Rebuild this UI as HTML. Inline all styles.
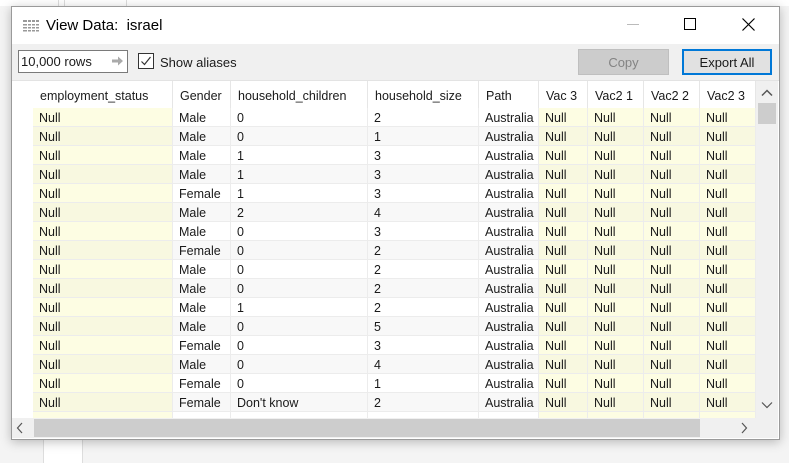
<!DOCTYPE html>
<html><head><style>
*{margin:0;padding:0;box-sizing:border-box}
body{width:789px;height:463px;background:#f4f4f4;position:relative;overflow:hidden;font-family:"Liberation Sans",Arial,sans-serif;font-size:12.5px;color:#1a1a1a}
.a{position:absolute}
.win{left:11px;top:6px;width:769px;height:434px;background:#fff;border:1px solid #9a9a9a;box-shadow:0 2px 10px rgba(0,0,0,.25)}
.cell{position:absolute;height:19px;line-height:21px;padding-left:6px;white-space:nowrap;overflow:hidden;border-right:1px solid #ececec;border-bottom:1px solid #ececec}
.hd{position:absolute;top:81px;height:28px;line-height:30px;padding-left:7px;border-right:1px solid #e6e6e6;background:#fff;white-space:nowrap;overflow:hidden}
</style></head><body>
<div class="a" style="left:0;top:0;width:789px;height:6px;background:#fff"></div>
<div class="a" style="left:58px;top:0;width:1px;height:463px;background:#ddd"></div>
<div class="a" style="left:64px;top:0;width:1px;height:463px;background:#ddd"></div>
<div class="a" style="left:126px;top:0;width:1px;height:463px;background:#ddd"></div>
<div class="a" style="left:0;top:440px;width:789px;height:23px;background:#f4f4f4"></div>
<div class="a" style="left:43px;top:440px;width:40px;height:23px;background:#fff;border-left:1px solid #ddd;border-right:1px solid #ddd"></div>
<div class="a win"></div>
<svg class="a" style="left:23px;top:19px" width="16" height="14"><g fill="#999"><rect x="0" y="1" width="16" height="2"/><rect x="0" y="5" width="16" height="1.5"/><rect x="0" y="8" width="16" height="1.5"/><rect x="0" y="11" width="16" height="1.5"/></g><g fill="#fff"><rect x="4" y="0" width="1" height="14"/><rect x="8" y="0" width="1" height="14"/><rect x="12" y="0" width="1" height="14"/></g></svg>
<div class="a" style="left:46px;top:17px;font-size:15px;color:#000">View Data:&nbsp; israel</div>
<div class="a" style="left:627px;top:24px;width:12px;height:1px;background:#bbb"></div>
<div class="a" style="left:684px;top:18px;width:12px;height:12px;border:1px solid #000"></div>
<svg class="a" style="left:742px;top:18px" width="13" height="13"><path d="M0.5 0.5L12.5 12.5M12.5 0.5L0.5 12.5" stroke="#000" stroke-width="1.2"/></svg>
<div class="a" style="left:12px;top:44px;width:767px;height:37px;background:#f0f0f0"></div>
<div class="a" style="left:18px;top:50px;width:110px;height:23px;background:#fff;border:1px solid #7a7a7a;line-height:22px;padding-left:2px;font-size:13px">10,000 rows</div>
<svg class="a" style="left:112px;top:56px" width="12" height="10"><path d="M0 3.5h6V0.5l5 4.5-5 4.5V6.5H0z" fill="#aaa"/></svg>
<div class="a" style="left:138px;top:53px;width:16px;height:16px;border:1px solid #333;background:#fff"></div>
<svg class="a" style="left:140px;top:55px" width="12" height="12"><path d="M1.5 6.5l3 3 6-7.5" stroke="#333" stroke-width="1.2" fill="none"/></svg>
<div class="a" style="left:160px;top:55px;font-size:13px">Show aliases</div>
<div class="a" style="left:578px;top:49px;width:91px;height:26px;background:#cccccc;border:1px solid #bfbfbf;text-align:center;line-height:25px;color:#838383;font-size:13px">Copy</div>
<div class="a" style="left:682px;top:49px;width:90px;height:26px;background:#e1e1e1;border:2px solid #0078d7;text-align:center;line-height:23px;font-size:13px">Export All</div>
<div class="a" style="left:12px;top:80px;width:767px;height:1px;background:#e3e3e3"></div>
<div id="g"></div>
<div class="a" style="left:756px;top:81px;width:22px;height:337px;background:#f0f0f0"></div>
<svg class="a" style="left:761px;top:89px" width="12" height="8"><path d="M1 6.5l5-5 5 5" stroke="#555" stroke-width="1.5" fill="none"/></svg>
<div class="a" style="left:758px;top:103px;width:18px;height:21px;background:#cdcdcd"></div>
<svg class="a" style="left:761px;top:401px" width="12" height="8"><path d="M1 1.5l5 5 5-5" stroke="#555" stroke-width="1.2" fill="none"/></svg>
<div class="a" style="left:12px;top:418px;width:744px;height:20px;background:#f0f0f0"></div>
<div class="a" style="left:34px;top:419px;width:666px;height:18px;background:#cdcdcd"></div>
<svg class="a" style="left:16px;top:422px" width="8" height="12"><path d="M6 1L1.5 6 6 11" stroke="#555" stroke-width="1.2" fill="none"/></svg>
<svg class="a" style="left:740px;top:422px" width="8" height="12"><path d="M2 1l4.5 5L2 11" stroke="#555" stroke-width="1.2" fill="none"/></svg>
<div class="a" style="left:756px;top:418px;width:22px;height:20px;background:#f0f0f0"></div>
<script>
const cols=[[33,140,'employment_status',1],[173,58,'Gender',0],[231,137,'household_children',0],[368,111,'household_size',0],[479,60,'Path',0],[539,49,'Vac 3',1],[588,56,'Vac2 1',1],[644,56,'Vac2 2',1],[700,56,'Vac2 3',1]];
const d=[['Male',0,2],['Male',0,1],['Male',1,3],['Male',1,3],['Female',1,3],['Male',2,4],['Male',0,3],['Female',0,2],['Male',0,2],['Male',0,2],['Male',1,2],['Male',0,5],['Female',0,3],['Male',0,4],['Female',0,1],['Female',"Don't know",2],['Male','','']];
let h='';
cols.forEach(c=>{h+=`<div class="hd" style="left:${c[0]}px;width:${c[1]}px">${c[2]}</div>`});
d.forEach((r,i)=>{const y=108+i*19;const alt=i%2;
const v=['Null',r[0],r[1],r[2],'Australia','Null','Null','Null','Null'];
cols.forEach((c,j)=>{let bg=c[3]?(alt?'#f8f8e0':'#fdfde3'):(alt?'#f8f8f8':'#fff');
h+=`<div class="cell" style="left:${c[0]}px;top:${y}px;width:${c[1]}px;background:${bg};${i==16?'height:10px;':''}">${i==16?'':v[j]}</div>`})});
document.getElementById('g').innerHTML=h;
</script>
</body></html>
